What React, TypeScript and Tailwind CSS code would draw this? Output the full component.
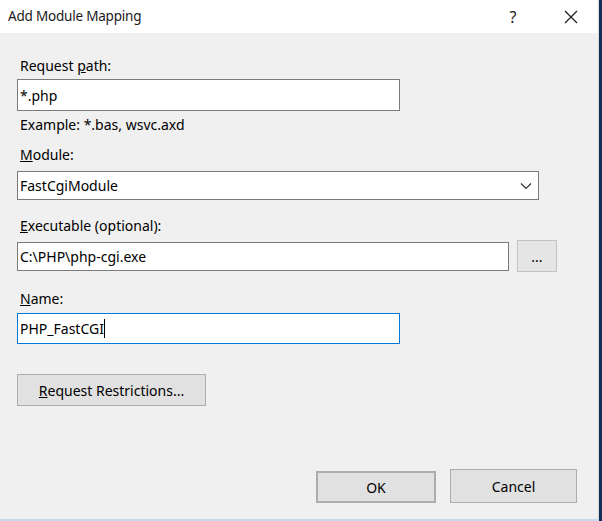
import React from 'react';

const font = { fontFamily: '"Noto Sans", "Open Sans", sans-serif' };

const Label: React.FC<{ children: React.ReactNode; className?: string }> = ({ children, className }) => (
  <div className={`h-5 leading-5 text-[14px] text-black pl-[3px] ${className ?? ''}`}>{children}</div>
);

const Btn: React.FC<{ children: React.ReactNode; className?: string }> = ({ children, className }) => (
  <div className={`bg-[#e1e1e1] border border-[#adadad] flex items-center justify-center text-[14px] text-black ${className ?? ''}`}>
    {children}
  </div>
);

export default function App() {
  return (
    <div className="w-[602px] h-[521px] flex border-r-[3px] border-[#0f2f57]" style={font}>
      <div className="flex-1 flex flex-col bg-[#f0f0f0] border-r border-[#d8d8d8] border-b-2 border-b-[#c5d9ec]">
        {/* title bar */}
        <div className="h-[33px] bg-white flex items-center pl-[8px] pr-[20px] text-[13.5px] text-[#1a1a1a]">
          <span className="flex-1 tracking-[-0.2px]">Add Module Mapping</span>
          <span className="w-[14px] text-center mr-[44px] text-[16px]">?</span>
          <svg width="14" height="14" viewBox="0 0 14 14" className="text-[#222]">
            <path d="M1 1 L13 13 M13 1 L1 13" stroke="currentColor" strokeWidth="1.3" />
          </svg>
        </div>

        <div className="flex-1 flex flex-col px-[17px]">
          <Label className="mt-[23px]">
            Request <span className="underline">p</span>ath:
          </Label>
          <div className="mt-[3px] w-[383px] h-[32px] bg-white border border-[#7a7a7a] flex items-center px-[2px] text-[14px]">
            *.php
          </div>
          <Label className="mt-[4px]">Example: *.bas, wsvc.axd</Label>

          <Label className="mt-[10px]">
            <span className="underline">M</span>odule:
          </Label>
          <div className="mt-[6px] w-[522px] h-[29px] bg-white border border-[#7a7a7a] flex items-center pl-[2px] pr-[6px] text-[14px]">
            <span className="flex-1">FastCgiModule</span>
            <svg width="12" height="8" viewBox="0 0 12 8">
              <path d="M1 1.5 L6 6.5 L11 1.5" fill="none" stroke="#333" strokeWidth="1.2" />
            </svg>
          </div>

          <Label className="mt-[16px]">
            <span className="underline">E</span>xecutable (optional):
          </Label>
          <div className="mt-[4px] h-[32px] flex items-center">
            <div className="w-[492px] h-[29px] bg-white border border-[#7a7a7a] flex items-center px-[2px] text-[14px]">
              C:\PHP\php-cgi.exe
            </div>
            <Btn className="ml-[8px] w-[40px] h-[32px] text-[11px] text-[#333] border-[#c2c2c2] bg-[#e5e5e5]">...</Btn>
          </div>

          <Label className="mt-[17px]">
            <span className="underline">N</span>ame:
          </Label>
          <div className="mt-[4px] w-[383px] h-[31px] bg-white border border-[#0078d7] flex items-center px-[2px] text-[14px]">
            PHP_FastCGI<span className="w-px h-[19px] bg-black" />
          </div>

          <Btn className="mt-[30px] w-[189px] h-[32px]">
            <span className="underline">R</span>equest Restrictions...
          </Btn>

          <div className="flex-1 flex items-end justify-end gap-[14px] pb-[16px] pr-[4px]">
            <Btn className="w-[120px] h-[32px] border-2 border-[#0078d7]">OK</Btn>
            <Btn className="w-[127px] h-[34px]">Cancel</Btn>
          </div>
        </div>
      </div>
    </div>
  );
}
